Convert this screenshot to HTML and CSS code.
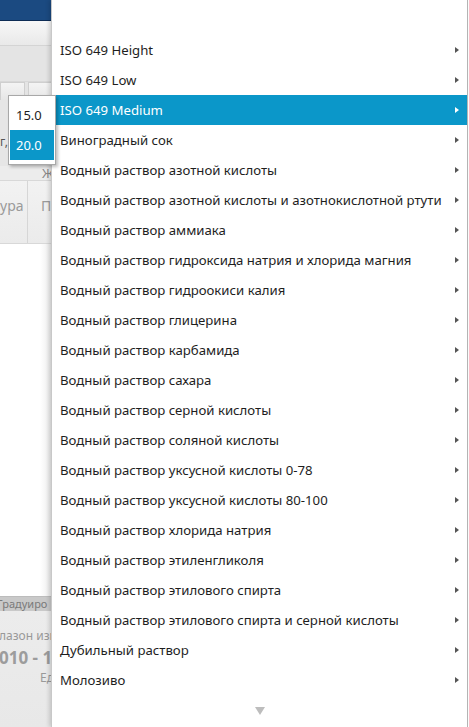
FILE: index.html
```html
<!DOCTYPE html>
<html>
<head>
<meta charset="utf-8">
<link rel="stylesheet" href="styles.css">
</head>
<body>
<div class="app">
  <div class="titlebar"></div>
  <div class="toolbar"></div>
  <div class="strip"></div>
  <div class="buttons">
    <div class="btn"></div>
    <div class="btn"></div>
  </div>
  <div class="fieldrow"><span class="ftext">г,</span></div>
  <div class="jrow"><span class="jtext">Ж</span></div>
  <div class="tabs">
    <div class="tab t1">ура</div>
    <div class="tab t2">П</div>
  </div>
  <div class="content"></div>
  <div class="grbar"><span>Градуиро</span></div>
  <div class="info">
    <div class="l1">лазон изм</div>
    <div class="l2">010 - 1</div>
    <div class="l3">Ед</div>
  </div>
</div>

<div class="menu">
  <ul class="items">
    <li>ISO 649 Height</li>
    <li>ISO 649 Low</li>
    <li class="active">ISO 649 Medium</li>
    <li>Виноградный сок</li>
    <li>Водный раствор азотной кислоты</li>
    <li>Водный раствор азотной кислоты и азотнокислотной ртути</li>
    <li>Водный раствор аммиака</li>
    <li>Водный раствор гидроксида натрия и хлорида магния</li>
    <li>Водный раствор гидроокиси калия</li>
    <li>Водный раствор глицерина</li>
    <li>Водный раствор карбамида</li>
    <li>Водный раствор сахара</li>
    <li>Водный раствор серной кислоты</li>
    <li>Водный раствор соляной кислоты</li>
    <li>Водный раствор уксусной кислоты 0-78</li>
    <li>Водный раствор уксусной кислоты 80-100</li>
    <li>Водный раствор хлорида натрия</li>
    <li>Водный раствор этиленгликоля</li>
    <li>Водный раствор этилового спирта</li>
    <li>Водный раствор этилового спирта и серной кислоты</li>
    <li>Дубильный раствор</li>
    <li>Молозиво</li>
  </ul>
  <div class="scrolldown"><span class="tri"></span></div>
</div>

<div class="submenu">
  <div class="subitem">15.0</div>
  <div class="subitem active">20.0</div>
</div>
</body>
</html>
```

FILE: styles.css
```css
html, body {
  margin: 0;
  padding: 0;
}
body {
  width: 469px;
  height: 727px;
  overflow: hidden;
  position: relative;
  background: #fff;
  font-family: "Noto Sans", "Open Sans", sans-serif;
}
.app {
  width: 52px;
  height: 727px;
  display: flex;
  flex-direction: column;
  overflow: hidden;
  background: #f0f0f0;
  white-space: nowrap;
}
.titlebar {
  height: 20px;
  background: #1b4a81;
  border-bottom: 1px solid #0d2c55;
  flex: none;
}
.toolbar {
  height: 24px;
  flex: none;
  background: linear-gradient(#f7f7f7, #e9e9e9);
  border-bottom: 1px solid #d4d4d4;
}
.strip {
  height: 35px;
  flex: none;
  background: #e4e4e4;
  border-bottom: 1px solid #d8d8d8;
}
.buttons {
  height: 18px;
  flex: none;
  display: flex;
  gap: 3px;
  background: #e4e4e4;
}
.btn {
  width: 23px;
  background: linear-gradient(#f4f4f4, #e6e6e6);
  border: 1px solid #cfcfcf;
  border-bottom: none;
}
.fieldrow {
  height: 66px;
  flex: none;
  background: #e6e6e6;
  font-size: 12px;
  color: #555;
  display: flex;
  align-items: center;
}
.ftext { margin-left: 0; margin-top: 16px; }
.jrow {
  height: 14px;
  flex: none;
  background: #ececec;
}
.jtext {
  display: block;
  font-size: 13px;
  color: #888;
  margin-left: 42px;
  line-height: 14px;
}
.tabs {
  height: 62px;
  flex: none;
  display: flex;
  background: linear-gradient(#f2f2f2, #ebebeb);
  border-top: 1px solid #d8d8d8;
  border-bottom: 1px solid #d8d8d8;
}
.tab {
  font-size: 14px;
  color: #9a9a9a;
  padding-top: 15px;
}
.t1 {
  width: 27px;
  border-right: 1px solid #d6d6d6;
}
.t2 { padding-left: 13px; }
.content {
  flex: 1;
  background: linear-gradient(90deg, #fff 0, #fff 40px, #eaeaea 52px);
}
.grbar {
  height: 14px;
  flex: none;
  background: #c9c9c9;
  font-size: 11px;
  color: #7a7a7a;
  line-height: 14px;
  border-top: 1px solid #bcbcbc;
}
.grbar span { margin-left: -3px; }
.info {
  height: 116px;
  flex: none;
  background: linear-gradient(#ececec, #e8e8e8);
  color: #999;
}
.l1 { font-size: 12px; margin-top: 16px; margin-left: -1px; }
.l2 { font-size: 17px; font-weight: bold; margin-top: 2px; margin-left: -1px; color: #9c9c9c; }
.l3 { font-size: 12px; margin-top: 0; margin-left: 40px; }

/* Menu overlay */
.menu {
  position: absolute;
  left: 51px;
  top: 0;
  width: 417px;
  height: 727px;
  background: #fff;
  border-left: 1px solid #c8c8c8;
  border-right: 1px solid #b4b4b4;
  box-shadow: -2px 0 4px rgba(0,0,0,0.15);
  box-sizing: border-box;
}
.items {
  list-style: none;
  margin: 0;
  padding: 35px 0 0 0;
}
.items li {
  height: 30px;
  line-height: 30px;
  padding-left: 8px;
  font-size: 13.2px;
  color: #1e1e1e;
  position: relative;
  white-space: nowrap;
}
.items li::after {
  content: "";
  position: absolute;
  right: 8px;
  top: 12px;
  width: 0;
  height: 0;
  border-top: 3.5px solid transparent;
  border-bottom: 3.5px solid transparent;
  border-left: 4px solid #555;
}
.items li.active {
  background: #0b97c9;
  color: #fff;
}
.items li.active::after {
  border-left-color: #fff;
}
.scrolldown {
  height: 32px;
  display: flex;
  justify-content: center;
  align-items: center;
}
.tri {
  width: 0;
  height: 0;
  border-left: 5px solid transparent;
  border-right: 5px solid transparent;
  border-top: 8px solid #bdbdbd;
}

/* Sub menu */
.submenu {
  position: absolute;
  left: 8px;
  top: 95px;
  width: 48px;
  padding: 4px 1px 4px 1px;
  background: #fff;
  border: 1px solid #a8a8a8;
  box-shadow: 2px 2px 3px rgba(0,0,0,0.25);
  box-sizing: border-box;
}
.subitem {
  height: 30px;
  line-height: 30px;
  padding-left: 6px;
  font-size: 13px;
  color: #1e1e1e;
}
.subitem.active {
  background: #0b97c9;
  color: #fff;
}
```
